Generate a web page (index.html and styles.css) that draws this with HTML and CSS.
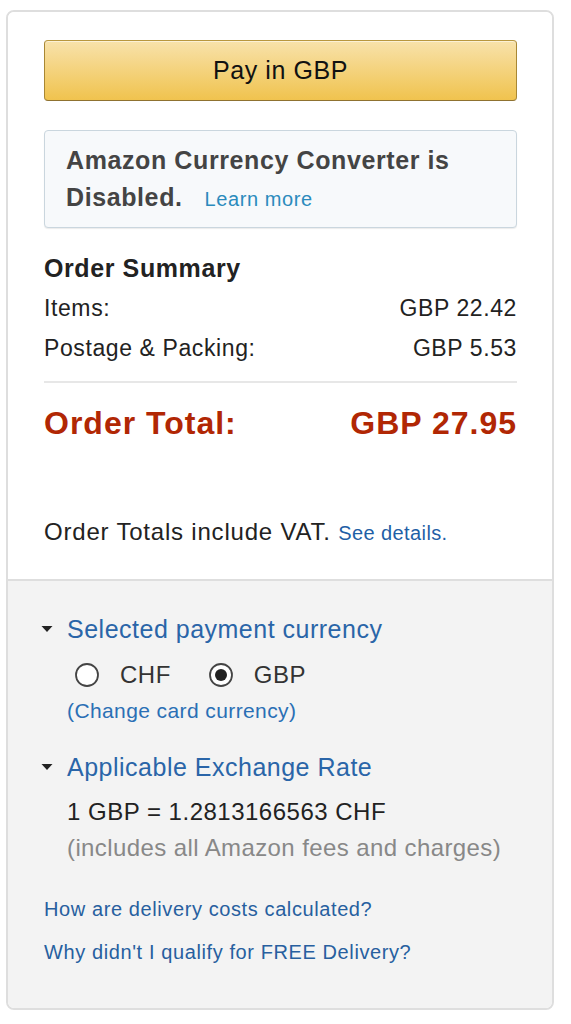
FILE: index.html
```html
<!DOCTYPE html>
<html lang="en">
<head>
<meta charset="utf-8">
<title>Order Summary</title>
<link rel="stylesheet" href="styles.css">
</head>
<body>
<div class="box">
  <div class="top">
    <button class="pay-btn" type="button">Pay in GBP</button>
    <div class="notice">
      <div class="notice-line"><span class="notice-text">Amazon Currency Converter is</span></div>
      <div class="notice-line"><span class="notice-text">Disabled.</span><a class="learn" href="#">Learn more</a></div>
    </div>
    <div class="summary">
      <div class="summary-title">Order Summary</div>
      <div class="row"><span>Items:</span><span>GBP 22.42</span></div>
      <div class="row"><span>Postage &amp; Packing:</span><span>GBP 5.53</span></div>
      <hr class="divider">
      <div class="total"><span>Order Total:</span><span>GBP 27.95</span></div>
    </div>
    <div class="vat">Order Totals include VAT. <a class="see" href="#">See details.</a></div>
  </div>
  <div class="bottom">
    <div class="expander">
      <svg class="caret" width="12" height="8" viewBox="0 0 12 8"><path d="M0.5 1 L11.5 1 L6 7 Z" fill="#222"/></svg>
      <a class="exp-title" href="#">Selected payment currency</a>
    </div>
    <div class="radios">
      <label class="radio">
        <svg width="26" height="26" viewBox="0 0 26 26"><circle cx="13" cy="13" r="11" fill="#fff" stroke="#444" stroke-width="1.8"/></svg>
        <span>CHF</span>
      </label>
      <label class="radio">
        <svg width="26" height="26" viewBox="0 0 26 26"><circle cx="13" cy="13" r="11" fill="#fff" stroke="#444" stroke-width="1.8"/><circle cx="13" cy="13" r="6" fill="#222"/></svg>
        <span>GBP</span>
      </label>
    </div>
    <a class="change" href="#">(Change card currency)</a>
    <div class="expander second">
      <svg class="caret" width="12" height="8" viewBox="0 0 12 8"><path d="M0.5 1 L11.5 1 L6 7 Z" fill="#222"/></svg>
      <a class="exp-title" href="#">Applicable Exchange Rate</a>
    </div>
    <div class="rate">1 GBP = 1.2813166563 CHF</div>
    <div class="fees">(includes all Amazon fees and charges)</div>
    <div class="links">
      <a href="#">How are delivery costs calculated?</a>
      <a href="#">Why didn't I qualify for FREE Delivery?</a>
    </div>
  </div>
</div>
</body>
</html>
```
FILE: styles.css
```css
html, body {
  margin: 0;
  padding: 0;
  background: #fff;
}
body {
  font-family: "Liberation Sans", Arial, sans-serif;
  color: #111;
  padding: 10px 0 0 6px;
}
a {
  text-decoration: none;
}
.box {
  width: 544px;
  border: 2px solid #dedede;
  border-radius: 8px;
  overflow: hidden;
}
.top {
  padding: 28px 35px 0 36px;
  background: #fff;
}
.pay-btn {
  display: block;
  width: 100%;
  height: 61px;
  border: 1px solid #a88734;
  border-color: #b8973f #a88734 #8f7230;
  border-radius: 4px;
  background: linear-gradient(to bottom, #f8e2ab, #f0c34e);
  box-shadow: inset 0 1px 0 rgba(255,255,255,0.5);
  font-family: "Liberation Sans", Arial, sans-serif;
  font-size: 25px;
  letter-spacing: 0.6px;
  color: #111;
  padding: 0;
}
.notice {
  margin-top: 29px;
  height: 98px;
  box-sizing: border-box;
  padding: 11px 20px 11px 21px;
  border: 1px solid #cad6de;
  border-radius: 4px;
  background: #f7f9fb;
  box-shadow: 0 1px 1px rgba(0,0,0,0.08);
}
.notice-line {
  display: flex;
  align-items: baseline;
  height: 37px;
  line-height: 37px;
}
.notice-text {
  font-weight: bold;
  font-size: 25px;
  letter-spacing: 0.6px;
  color: #444;
}
.learn {
  margin-left: 22px;
  font-size: 20px;
  letter-spacing: 0.6px;
  color: #2b8bbd;
}
.summary {
  margin-top: 20px;
}
.summary-title {
  font-weight: bold;
  font-size: 25px;
  letter-spacing: 0.6px;
  line-height: 40px;
  color: #222;
}
.row {
  display: flex;
  justify-content: space-between;
  font-size: 23px;
  letter-spacing: 0.6px;
  line-height: 40px;
  color: #222;
}
.divider {
  margin: 13px 0 0;
  border: 0;
  border-top: 2px solid #e7e7e7;
  height: 0;
}
.total {
  margin-top: 20px;
  display: flex;
  justify-content: space-between;
  font-weight: bold;
  font-size: 32px;
  letter-spacing: 1px;
  line-height: 40px;
  color: #b12704;
}
.vat {
  margin-top: 72px;
  padding-bottom: 29px;
  font-size: 24px;
  letter-spacing: 0.8px;
  line-height: 34px;
  color: #222;
}
.see {
  font-size: 20px;
  letter-spacing: 0.4px;
  color: #1f5fa6;
}
.bottom {
  border-top: 2px solid #dedede;
  background: #f3f3f3;
  padding: 30px 35px 34px 36px;
}
.expander {
  display: flex;
  align-items: center;
  height: 36px;
}
.caret {
  margin-left: -3px;
  margin-right: 14px;
}
.exp-title {
  font-size: 25px;
  letter-spacing: 0.5px;
  color: #2a65a8;
}
.radios {
  margin-top: 10px;
  padding-left: 30px;
  display: flex;
  align-items: center;
  height: 36px;
  gap: 37px;
}
.radio {
  display: flex;
  align-items: center;
  gap: 20px;
  font-size: 24px;
  letter-spacing: 0.5px;
  color: #333;
}
.radio svg {
  display: block;
}
.change {
  display: block;
  margin-top: 3px;
  padding-left: 23px;
  font-size: 21px;
  letter-spacing: 0.4px;
  line-height: 30px;
  color: #2a6fb5;
}
.expander.second {
  margin-top: 23px;
}
.rate {
  margin-top: 9px;
  padding-left: 23px;
  font-size: 24px;
  letter-spacing: 0.5px;
  line-height: 36px;
  color: #222;
}
.fees {
  padding-left: 23px;
  font-size: 24px;
  letter-spacing: 0.4px;
  line-height: 36px;
  color: #888;
}
.links {
  margin-top: 22px;
  display: flex;
  flex-direction: column;
}
.links a {
  font-size: 20px;
  letter-spacing: 0.6px;
  line-height: 43px;
  color: #275f9f;
}
```
